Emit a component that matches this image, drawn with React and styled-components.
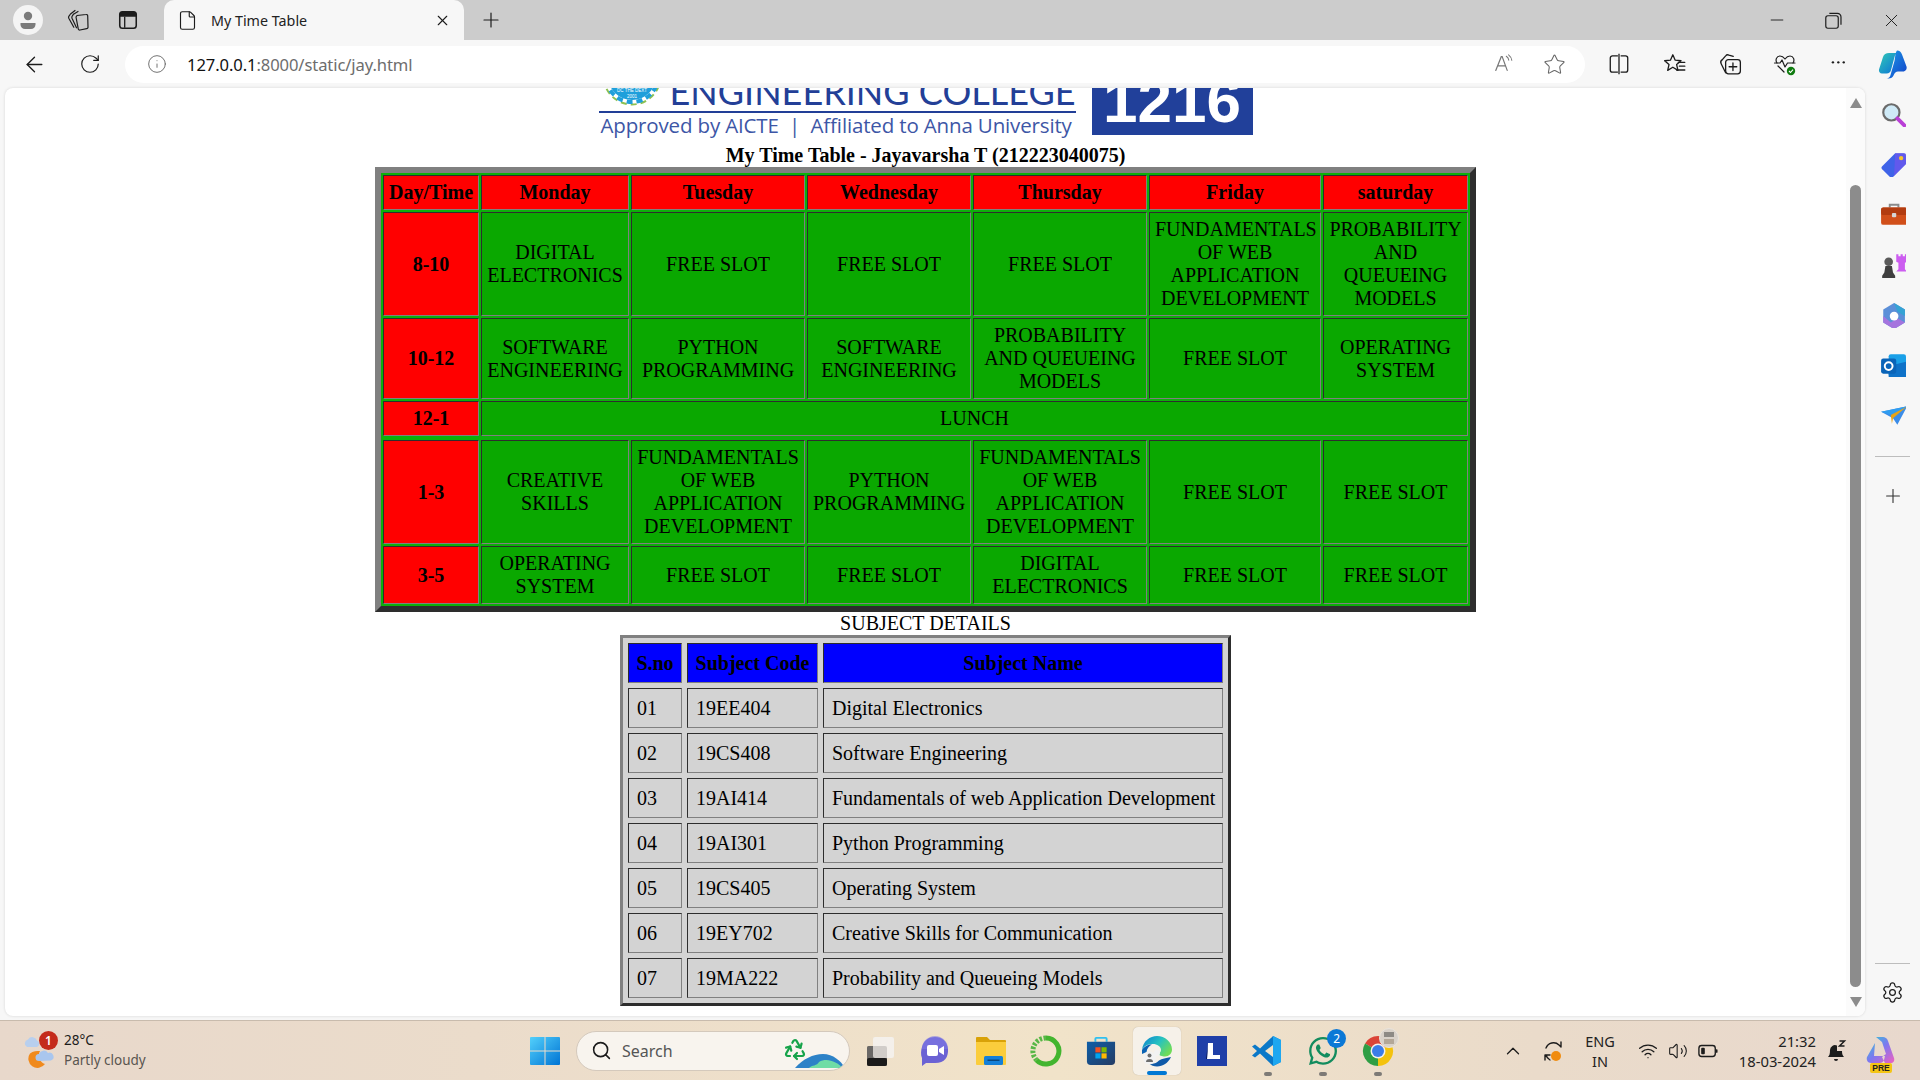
import React from "react";
import styled, { createGlobalStyle } from "styled-components";
import { ArrowLeft, RotateCw, Info, Star, X, Plus, Minus, Settings, Search, ChevronUp, Wifi, Volume2, File, Recycle } from "lucide-react";
import { FaWhatsapp } from "react-icons/fa";

const Global = createGlobalStyle`
  html, body { margin: 0; padding: 0; width: 100%; height: 100%; overflow: hidden; background: #f7f7f7; }
  #root { width: 100%; height: 100%; }
  * { box-sizing: border-box; }
`;

const Shell = styled.div`
  width: 1920px; height: 1080px; display: flex; flex-direction: column; overflow: hidden;
  font-family: "Noto Sans", "Open Sans", sans-serif; color: #1a1a1a;
`;

/* ---------- Title bar ---------- */
const TabBar = styled.div`height: 40px; flex: none; background: #cccccc; display: flex; align-items: stretch; padding-left: 3px;`;
const Slot = styled.div`
  width: ${p => p.$w}px; flex: none; display: flex; align-items: center; justify-content: center;
`;
const Avatar = styled.div`
  width: 30px; height: 30px; border-radius: 50%; background: #f4f4f4; display: flex; align-items: center; justify-content: center;
`;
const Tab = styled.div`
  width: 300px; flex: none; margin-left: 10px; background: #f7f7f7; border-radius: 10px 10px 0 0;
  display: flex; align-items: center; padding: 0 13px 0 13px;
`;
const TabTitle = styled.span`flex: 1; margin-left: 13px; font-size: 14.3px; color: #222;`;
const Grow = styled.div`flex: 1;`;

/* ---------- Toolbar ---------- */
const Toolbar = styled.div`height: 48px; flex: none; background: #f7f7f7; display: flex; align-items: center; padding-left: 6px;`;
const Address = styled.div`
  width: 1460px; height: 37px; flex: none; margin-left: 7px; margin-right: 6.5px; background: #fff; border-radius: 18.5px;
  display: flex; align-items: center; padding-left: 22px;
`;
const Url = styled.span`
  margin-left: 20px; font-size: 16.6px; color: #6d6d6d; flex: 1; letter-spacing: -0.1px;
  b { font-weight: 400; color: #111; }
`;

/* ---------- Body ---------- */
const Body = styled.div`flex: 1; min-height: 0; display: flex; background: #f7f7f7;`;
const Panel = styled.div`
  width: 1860px; flex: none; margin: 0 0 4px 5px; background: #fff; border-radius: 8px; overflow: hidden; display: flex;
  box-shadow: 0 0 3px rgba(0,0,0,.14);
`;
const Viewport = styled.div`flex: 1; min-width: 0; overflow: hidden; font-family: "Liberation Serif", "Times New Roman", serif; font-size: 20px; color: #000; display: flex; flex-direction: column; align-items: center;`;

const LogoClip = styled.div`height: 56px; width: 100%; flex: none; overflow: hidden; display: flex; justify-content: center; align-items: flex-end;`;
const LogoInner = styled.div`width: 654px; flex: none; display: flex; align-items: flex-end; justify-content: space-between; padding-bottom: 7px;`;
const LogoLeft = styled.div`width: 477px; flex: none; display: flex; flex-direction: column;`;
const LogoTop = styled.div`height: 23px; display: flex; align-items: flex-end; justify-content: space-between; padding-left: 3px;`;
const College = styled.span`
  font-family: Lato, sans-serif; font-size: 36px; line-height: 40px; height: 40px; color: #233f97; font-weight: 400; white-space: nowrap; letter-spacing: 0; text-transform: uppercase;
`;
const LogoRule = styled.div`height: 2.5px; background: #223f97;`;
const Tagline = styled.div`
  height: 24px; padding-left: 2px; font-family: "Open Sans", sans-serif; font-size: 20.5px; line-height: 24px; color: #3d56a6; white-space: nowrap; letter-spacing: -0.15px;
`;
const Code = styled.div`
  width: 161px; height: 70px; flex: none; margin-bottom: 2px; background: #21409a; color: #fff; overflow: hidden;
  display: flex; align-items: flex-end; justify-content: center; font-family: "Liberation Sans", sans-serif; font-weight: 700; font-size: 62px; line-height: 62px; padding-bottom: 3px;
`;

const Heading = styled.div`height: 23px; line-height: 23px; flex: none; font-weight: ${p => (p.$bold ? 700 : 400)}; text-align: center;`;

const Timetable = styled.table`
  width: 1101px; flex: none; table-layout: fixed; border-collapse: separate; border-spacing: 2px; background: #0db00a;
  border: 6px solid; border-color: #808080 #2d2d2d #2d2d2d #808080;
`;
const Cell = styled.td`
  padding: 5px; text-align: center; vertical-align: middle; line-height: 23px; color: #000;
  background: ${p => (p.$red ? "#ff0000" : "#0aa800")}; font-weight: ${p => (p.$red ? 700 : 400)};
  border: 1px solid; border-color: #2d2d2d #808080 #808080 #2d2d2d;
`;

const SubjectTable = styled.table`
  width: 611px; flex: none; table-layout: fixed; border-collapse: separate; border-spacing: 5px; background: #d3d3d3;
  border: 3px solid; border-color: #808080 #2d2d2d #2d2d2d #808080;
`;
const SubjectCell = styled.td`
  height: 40px; padding: 0 0 0 8px; line-height: 23px; color: #000; white-space: nowrap;
  border: 1px solid; border-color: #2d2d2d #808080 #808080 #2d2d2d;
`;
const SubjectHead = styled.th`
  height: 40px; padding: 0; text-align: center; line-height: 23px; color: #000; background: #0000ff; font-weight: 700; white-space: nowrap;
  border: 1px solid; border-color: #2d2d2d #808080 #808080 #2d2d2d;
`;

const Scrollbar = styled.div`width: 19px; flex: none; background: #fbfbfb; display: flex; flex-direction: column; align-items: center; padding-top: 10px;`;
const Arrow = styled.div`
  width: 0; height: 0; border-left: 6.5px solid transparent; border-right: 6.5px solid transparent; flex: none;
  ${p => (p.$down ? "border-top: 10px solid #8c8c8c;" : "border-bottom: 10px solid #8c8c8c;")}
`;
const Thumb = styled.div`width: 11px; height: 802px; flex: none; margin: 77px 0 10px; background: #8c8c8c; border-radius: 6px;`;

const SidePane = styled.div`width: 55px; flex: none; display: flex; flex-direction: column; align-items: center; padding-top: 1px;`;
const SideSlot = styled.div`height: 50.2px; width: 100%; flex: none; display: flex; align-items: center; justify-content: center;`;
const SidePlus = styled(SideSlot)`margin-top: 14px;`;
const SideRule = styled.div`width: 35px; height: 1px; flex: none; background: #bdbdbd; margin: ${p => p.$m};`;
const GearSlot = styled.div`width: 100%; height: 44px; flex: none; margin-bottom: 6px; display: flex; align-items: center; justify-content: center;`;

/* ---------- Taskbar ---------- */
const Taskbar = styled.div`
  height: 60px; flex: none; border-top: 1px solid #c8bbad; display: grid; grid-template-columns: 530px 1fr auto; align-items: center;
  background: linear-gradient(90deg, #e8d8cb 0%, #ebdccb 25%, #f1e3c9 55%, #eadbca 80%, #e8d8cd 100%);
`;
const Weather = styled.div`display: flex; align-items: center; padding-left: 24px; position: relative;`;
const WeatherBadge = styled.span`
  position: absolute; left: 39px; top: -2px; width: 19px; height: 19px; border-radius: 50%; background: #c42b1c; color: #fff;
  font-size: 12px; font-weight: 600; display: flex; align-items: center; justify-content: center; font-family: "Noto Sans", sans-serif;
`;
const WeatherText = styled.div`margin-left: 6px; margin-top: -2px; display: flex; flex-direction: column; gap: 2px; font-size: 13.5px; line-height: 18px; color: #1c1c1c; span + span { color: #595550; }`;
const Center = styled.div`display: flex; align-items: center;`;
const SearchBox = styled.div`
  width: 274px; height: 40px; margin: 0 2.5px 0 16px; border-radius: 20px; background: #f8f4ee; border: 1px solid #d4c9bc; flex: none;
  display: flex; align-items: center; padding-left: 14px; position: relative; overflow: hidden; font-size: 16px; color: #555;
`;
const SearchText = styled.span`margin-left: 10px;`;
const SearchArt = styled.div`position: absolute; right: 4px; bottom: 2px; line-height: 0;`;
const RecycleMark = styled.div`position: absolute; right: 42px; top: 5px; line-height: 0;`;
const TaskBtn = styled.div`
  width: 55.3px; height: 48px; flex: none; display: flex; align-items: center; justify-content: center; position: relative;
  &::before {
    content: ""; position: absolute; left: 3.6px; top: 0; width: 48px; height: 48px; border-radius: 5px;
    background: ${p => (p.$active ? "#f6f1e9" : "transparent")}; box-shadow: ${p => (p.$active ? "0 0 1px rgba(0,0,0,.25)" : "none")};
  }
  svg { position: relative; }
`;
const Underline = styled.span`position: absolute; bottom: 0; left: 17.6px; width: 20px; height: 4px; border-radius: 2px; background: #0078d4;`;
const RunDot = styled.span`position: absolute; bottom: -1px; left: 24px; width: 8px; height: 4px; border-radius: 2px; background: #7d7a76;`;
const CountBadge = styled.span`
  position: absolute; top: 2px; right: 4px; width: 19px; height: 19px; border-radius: 50%; background: #0b78d6; color: #fff;
  font-size: 12px; display: flex; align-items: center; justify-content: center;
`;
const ThumbBadge = styled.span`
  position: absolute; top: 1px; right: 6px; width: 20px; height: 20px; border-radius: 50%; background: #d9d2ca; border: 1px solid #e9e4dc;
  display: flex; flex-direction: column; align-items: center; justify-content: center; gap: 2px;
  i { display: block; width: 10px; height: 5px; background: #8d8a85; }
  i + i { background: #b3a798; }
`;
const Tray = styled.div`display: flex; align-items: center; height: 100%; padding-right: 16px;`;
const TraySlot = styled.div`width: ${p => p.$w}px; flex: none; display: flex; align-items: center; justify-content: center; position: relative;`;
const Lang = styled.div`width: 50px; flex: none; text-align: center; font-size: 14.5px; line-height: 20px; color: #222;`;
const Clock = styled.div`width: 92px; flex: none; text-align: right; font-size: 14.8px; line-height: 20px; color: #222; white-space: nowrap;`;
const PreTag = styled.span`
  position: absolute; left: 14px; bottom: -6px; width: 22px; text-align: center; background: #f4c514; color: #222; font-size: 8.5px; font-weight: 800; border-radius: 2px; line-height: 10px; font-family: "Liberation Sans", sans-serif;
`;

/* ---------- Drawn icons ---------- */
const I = ({ size = 24, vb = "0 0 24 24", children, ...r }) => (
  <svg width={size} height={size} viewBox={vb} fill="none" {...r}>{children}</svg>
);
const line = { stroke: "#1c1c1c", strokeWidth: 1.4, strokeLinecap: "round", strokeLinejoin: "round" };

const Person = () => <I size={24}><circle cx="12" cy="8" r="4.2" fill="#7b7b7b" /><path d="M4.5 15h15v1.5a4.5 4.5 0 0 1-4.5 4.5H9a4.5 4.5 0 0 1-4.5-4.5z" fill="#7b7b7b" /></I>;
const Workspaces = () => <I size={24}><g {...line} strokeWidth="1.2"><path d="M11 7.500l9-1a1.500 1.500 0 0 1 1.700 1.300L22 19a1.500 1.500 0 0 1-1.300 1.700L14 22a1.500 1.500 0 0 1-1.800-1.300L10 9z" /><path d="M7.500 6.200 12 3.500M7.500 6.200 6 8.500c-.3.700-.2 1.200 0 1.800l4.500 9.500" /><path d="M4.500 6 9 2.500M4.500 6 2.800 8.300c-.4.700-.3 1.300 0 1.900l5 9" /></g></I>;
const VTabs = () => <I size={22} vb="0 0 20 20"><rect x="2.5" y="2.5" width="15" height="15" rx="2.5" stroke="#1c1c1c" strokeWidth="1.4" /><path d="M2.5 5a2.5 2.5 0 0 1 2.5-2.5h10A2.5 2.5 0 0 1 17.5 5v2h-15z" fill="#1c1c1c" /><path d="M7 7v10" stroke="#1c1c1c" strokeWidth="1.2" /></I>;
const Restore = () => <I size={19} vb="0 0 16 16"><rect x="1.5" y="4" width="10.5" height="10.5" rx="1.8" stroke="#1c1c1c" strokeWidth="1" /><path d="M4.500 2h6.800A3 3 0 0 1 14.300 5v6.600" stroke="#1c1c1c" strokeWidth="1" /></I>;
const ReadAloud = () => <I size={22}><path d="M3 19 9 4h1l5.5 15M5.200 14h8" stroke="#777" strokeWidth="1.3" strokeLinecap="round" /><path d="M14.500 3.500a6 6 0 0 1 2.700 4.300M17 2a9 9 0 0 1 3.500 6" stroke="#777" strokeWidth="1.1" strokeLinecap="round" /></I>;
const SplitScreen = () => <I size={24} vb="0 0 22 22"><path d="M10 3.500H5a2 2 0 0 0-2 2v11a2 2 0 0 0 2 2h5M12.500 3.500H17a2 2 0 0 1 2 2v11a2 2 0 0 1-2 2h-4.500M11 1.500v19" stroke="#1c1c1c" strokeWidth="1.200" /></I>;
const Favs = () => <I size={24} vb="0 0 22 22"><path d="M9 2.500l2.200 5 5.300.5-4 3.500 1.200 5.300L9 14l-4.700 2.800 1.200-5.300-4-3.500 5.300-.5z" {...line} strokeWidth="1.200" /><path d="M14 9.500h6M15 13h5M12.500 16.500H20" {...line} strokeWidth="1.200" /></I>;
const Collections = () => <I size={24} vb="0 0 22 22"><rect x="7" y="7" width="13.500" height="13" rx="2.500" {...line} strokeWidth="1.200" /><path d="M13.700 10v7M10.200 13.500h7" {...line} strokeWidth="1.200" /><path d="M7 19 3 11a3 3 0 0 1 1-4l3-3.500a2.500 2.500 0 0 1 3-.7L14 4" {...line} strokeWidth="1.200" /></I>;
const Health = () => <I size={24}><path d="M20 11c2-3 .5-7-3-7-2 0-3.500 1-5 3-1.500-2-3-3-5-3-3.500 0-5 4-3 7" {...line} strokeWidth="1.200" /><path d="M1.500 11H7l2-3 3 7 2.500-4H22M5 14l6 6" {...line} strokeWidth="1.200" /><circle cx="18" cy="19" r="4.200" fill="#107c10" /><path d="M16 19l1.500 1.500 2.500-2.800" stroke="#fff" strokeWidth="1.100" /></I>;
const Dots = () => <I size={20}><circle cx="3.500" cy="10" r="1.400" fill="#1c1c1c" /><circle cx="10" cy="10" r="1.400" fill="#1c1c1c" /><circle cx="16.500" cy="10" r="1.400" fill="#1c1c1c" /></I>;

const Copilot = ({ size = 30 }) => (
  <I size={size} vb="0 0 30 30">
    <defs>
      <linearGradient id="cpA" x1="0" y1="0" x2="1" y2="1"><stop offset="0" stopColor="#31c9b6" /><stop offset="1" stopColor="#0a6fd8" /></linearGradient>
      <linearGradient id="cpB" x1="0" y1="0" x2="1" y2="1"><stop offset="0" stopColor="#1e9ee8" /><stop offset="1" stopColor="#1140c8" /></linearGradient>
    </defs>
    <path d="M11 4h9c-2 .5-3 2-3.500 4L13 21c-.5 2-2 3.500-4.500 3.500H4c-2 0-3.500-2-3-4L5 8c.8-2.500 3-4 6-4z" fill="url(#cpA)" />
    <path d="M19 1.500c2.500 0 4 1.500 5 4l4.500 12c.8 2.500-1 5-3.500 5h-5c-2 0-3.500 1.500-4.500 4-.8 2-2.500 3-5 3h-2c2 0 3.500-1.500 4-3.500l4-14c.8-3 .5-8 2.500-10.500z" fill="url(#cpB)" />
  </I>
);

const SearchColor = () => <I size={26}><circle cx="10.500" cy="10.500" r="7.500" fill="#cfeaf7" stroke="#6b6b6b" strokeWidth="2" /><path d="M16 16l6.500 6.500" stroke="#b93fd6" strokeWidth="3.500" strokeLinecap="round" /></I>;
const TagIcon = () => <I size={26}><path d="M14 2h8a2 2 0 0 1 2 2v8L12 24a2 2 0 0 1-2.800 0L2 16.800A2 2 0 0 1 2 14z" fill="#3f63e8" /><path d="M14 2h8a2 2 0 0 1 2 2v8L13 23z" fill="#7d52ee" opacity=".55" /><circle cx="19.500" cy="6.500" r="2" fill="#f5c52d" /></I>;
const Toolbox = () => <I size={26}><path d="M9 6V3.500h8V6" stroke="#8a8a8a" strokeWidth="1.800" /><rect x="1" y="6" width="24" height="16" rx="2" fill="#d14f1a" /><rect x="1" y="6" width="24" height="7" rx="2" fill="#b23c10" /><rect x="11" y="11" width="4" height="4" rx="1" fill="#d6d6d6" /></I>;
const Chess = () => <I size={26}><path d="M15 2h2v2h2V2h2v2h2V2h2v7l-2 1v6l2 2H15l2-2v-6l-2-1z" fill="#cc5df0" /><circle cx="8" cy="9" r="4" fill="#5a5a5a" /><path d="M5 13h6l1 6 2 3v3H2v-3l2-3z" fill="#3f3f3f" /></I>;
const M365 = () => <I size={26}><path d="M13 1l10 6v12l-10 6-10-6V7z" fill="#5b8fd8" /><path d="M13 1l10 6v6l-7-4z" fill="#35a3d4" /><path d="M3 13v6l10 6 10-6-7-4-6 4z" fill="#a574de" /><circle cx="13" cy="13" r="4" fill="#fff" /></I>;
const Outlook = () => <I size={26}><rect x="8" y="2" width="16" height="21" rx="2" fill="#1aa0e8" /><path d="M8 13l16-4v14H8z" fill="#0f72c8" /><rect x="1" y="6" width="14" height="14" rx="2" fill="#0a64b8" /><circle cx="8" cy="13" r="3.600" stroke="#fff" strokeWidth="1.800" /></I>;
const Plane = () => <I size={26}><path d="M1 9l24-5-9 17-4-6z" fill="#3b8ce8" /><path d="M1 9l24-5-15 8z" fill="#2f9df0" /><path d="M10 12l15-8-13 11-1 5z" fill="#e7a416" /></I>;

const WeatherIcon = () => <I size={34} vb="0 0 34 34"><path d="M6 19.500a9 9 0 0 0 15 10.500 9 9 0 0 1-5-13c-3 0-7 0-10 2.500z" fill="#f08a1d" /><path d="M3 13a4 4 0 0 1 1-7.500 5 5 0 0 1 9 1 3.500 3.500 0 0 1 0 6.500z" fill="#b8cfee" /><path d="M15 27a3.500 3.500 0 0 1 0-7 5 5 0 0 1 9-1 4 4 0 0 1 3 7.500z" fill="#a9c6ee" /></I>;
const WinLogo = () => (
  <I size={30} vb="0 0 30 30">
    <defs><linearGradient id="win" x1="0" y1="0" x2="1" y2="1"><stop offset="0" stopColor="#53d0fb" /><stop offset="1" stopColor="#0074d4" /></linearGradient></defs>
    <path d="M1 1h13.500v13.500H0V2a1 1 0 0 1 1-1zM15.500 1H29a1 1 0 0 1 1 1v12.500H15.500zM0 15.500h14.500V29H1a1 1 0 0 1-1-1zM15.500 15.500H30V28a1 1 0 0 1-1 1H15.500z" fill="url(#win)" />
  </I>
);
const GlobeArt = () => (
  <svg width="50" height="15" viewBox="0 0 50 15" fill="none">
    <path d="M0 15C8 6 18 1 28 1s18 7 22 14z" fill="#2d82c7" />
    <path d="M14 15c3-3 8-2 10-6 8-5 18 0 24 6z" fill="#6fdca5" />
  </svg>
);
const StackSq = () => <I size={32} vb="0 0 32 32"><rect x="3" y="11" width="20" height="20" rx="2" fill="#1b1b1b" /><rect x="9" y="2" width="21" height="21" rx="2" fill="#f3f0ec" opacity=".95" /><rect x="3" y="11" width="20" height="20" rx="2" fill="#b9b6b2" opacity=".5" /><rect x="3" y="23" width="20" height="8" rx="2" fill="#1b1b1b" /></I>;
const Meet = () => <I size={32} vb="0 0 32 32"><path d="M16 2c7 0 12 4 13 12 .5 8-3 14-13 14h-9L3 31v-8C1.500 20 2 15 3 12 5 5 10 2 16 2z" fill="#6b62d4" /><path d="M3 14a13 13 0 0 1 26 0H3z" fill="#7e79e4" opacity=".6" /><rect x="8" y="10" width="11" height="11" rx="2" fill="#fff" /><path d="M20 14l5-3v9l-5-3z" fill="#fff" /></I>;
const Folder = () => <I size={32} vb="0 0 32 32"><path d="M1 3a1 1 0 0 1 1-1h10l3 3h15a1 1 0 0 1 1 1v4H1z" fill="#d9a208" /><path d="M1 7h30v22a1 1 0 0 1-1 1H2a1 1 0 0 1-1-1z" fill="#fbcd3c" /><rect x="9" y="21" width="19" height="9" rx="1.500" fill="#1580d8" /><rect x="12.500" y="24.500" width="12" height="1.500" fill="#08477f" /></I>;
const Ring = () => <I size={32} vb="0 0 32 32"><path d="M16 3a13 13 0 1 1-9.500 22" stroke="#43b52f" strokeWidth="5" /><path d="M16 3A13 13 0 0 0 6.500 25" stroke="#58b746" strokeWidth="5" strokeDasharray="2.500 1.500" /></I>;
const Store = () => (
  <I size={30} vb="0 0 32 32">
    <defs><linearGradient id="st" x1="0" y1="0" x2="1" y2="1"><stop offset="0" stopColor="#0d5ea8" /><stop offset="1" stopColor="#263c63" /></linearGradient></defs>
    <path d="M10 6V3a1 1 0 0 1 1-1h10a1 1 0 0 1 1 1v3" stroke="#2fc0f0" strokeWidth="2" />
    <path d="M1 6h30v21a4 4 0 0 1-4 4H5a4 4 0 0 1-4-4z" fill="url(#st)" />
    <rect x="10" y="12" width="5.500" height="5.500" fill="#f25022" /><rect x="16.500" y="12" width="5.500" height="5.500" fill="#7fba00" />
    <rect x="10" y="18.500" width="5.500" height="5.500" fill="#00a4ef" /><rect x="16.500" y="18.500" width="5.500" height="5.500" fill="#ffb900" />
  </I>
);
const Edge = () => (
  <I size={32} vb="0 0 32 32">
    <defs>
      <linearGradient id="edA" x1="0" y1="0" x2="1" y2=".6"><stop offset="0" stopColor="#0c7fd0" /><stop offset=".55" stopColor="#27c2c0" /><stop offset="1" stopColor="#6fdc58" /></linearGradient>
    </defs>
    <path d="M1 15C2 6 9 1 16 1c8 0 15 6 15 13.500 0 4-3 7-7 7-3 0-6-1-6-2.500 0-1 2-1.500 2-4 0-3.500-4-6-8-6-5 0-9 2-11 6z" fill="url(#edA)" />
    <path d="M1 15c2-3.500 6-5.500 10-5.500-3 1.500-5 4-5.500 7.500L1 19z" fill="#0b63b4" />
    <path d="M30 22c-3 6-8 9.500-14 9.500-3 0-6-1-8-3 5 .5 7 0 10-3 3-2 7-2.500 12-3.500z" fill="#0f5aa8" />
    <circle cx="8.500" cy="23" r="6.500" fill="#f2f2f2" /><circle cx="8.500" cy="20.500" r="2" fill="#6d6d6d" /><path d="M5 27a3.500 3 0 0 1 7 0z" fill="#6d6d6d" />
    <circle cx="16" cy="18" r="3" fill="#f2f2f2" />
  </I>
);
const LLogo = () => <I size={30} vb="0 0 30 30"><rect width="30" height="30" fill="#1f3fa8" /><path d="M11 7h5v12h7v4H10z" fill="#fff" /><path d="M11 7l-2 16h1z" fill="#0b1a55" /></I>;
const VSCode = () => <I size={32} vb="0 0 32 32"><path d="M22 1l8 4v22l-8 4-13-12.500-5 4-3-2 5-4.500-5-4.500 3-2 5 4z" fill="#0a78c8" /><path d="M22 1l8 4v22l-8 4z" fill="#1ea7f0" /><path d="M22 10l-8 6 8 6z" fill="#f1e3c9" /></I>;
const Chrome = () => (
  <I size={32} vb="0 0 32 32">
    <path d="M16 16 L3 8.500A15 15 0 0 1 29 8.500z" fill="#db4437" />
    <path d="M16 16 L3 8.500A15 15 0 0 0 16 31z" fill="#2f9e44" />
    <path d="M16 16 L29 8.500A15 15 0 0 1 16 31z" fill="#f4c20d" />
    <circle cx="16" cy="16" r="7.500" fill="#f4f0ea" /><circle cx="16" cy="16" r="6" fill="#3b7ce8" />
  </I>
);
const Sync = () => <I size={24}><path d="M5 9a8 8 0 0 1 13-3l2 2V3" {...line} /><path d="M5 16a8 8 0 0 0 4 5M4 21v-5h5" {...line} /><circle cx="15" cy="17" r="5" fill="#f08c10" /></I>;
const Battery = () => <I size={20} vb="0 0 22 20"><rect x="1" y="4" width="18" height="12" rx="3" stroke="#1c1c1c" strokeWidth="1.500" /><rect x="3.500" y="6.500" width="4" height="7" rx="1" fill="#1c1c1c" /><rect x="19.500" y="8" width="2" height="4" rx="1" fill="#1c1c1c" /></I>;
const Bell = () => <I size={24}><path d="M5 18c1.500-1.500 2-3 2-7a5 5 0 0 1 7-4.500V12h5c0 3 .5 4.500 2 6z" fill="#1c1c1c" transform="translate(-1 0)" /><path d="M10 20h4a2 2 0 0 1-4 0z" fill="#1c1c1c" /><path d="M15.500 2h5l-5 5h5" stroke="#1c1c1c" strokeWidth="1.500" /></I>;
const CopilotPre = () => (
  <I size={32} vb="0 0 32 32">
    <defs><linearGradient id="cpP" x1="0" y1="0" x2="1" y2="1"><stop offset="0" stopColor="#2bd0d0" /><stop offset=".5" stopColor="#7d78f0" /><stop offset="1" stopColor="#f060c0" /></linearGradient></defs>
    <path d="M12 2h7c2 0 4 1 5 4l6 17c1 3-1 5-3 5h-6l-3-6 4-3-4-12zM11 8l-8 14c-1 3 1 6 4 6h9c2 0 3-1 4-3l1-4H10z" fill="url(#cpP)" />
  </I>
);

const Emblem = () => (
  <svg width="60" height="60" viewBox="0 0 60 60" style={{ flex: "none", marginBottom: 5 }}>
    <circle cx="30" cy="30" r="28.500" fill="none" stroke="#8cc152" strokeWidth="2" strokeDasharray="6 4" />
    <circle cx="30" cy="30" r="26" fill="none" stroke="#1f9fdb" strokeWidth="4" strokeDasharray="6 4" />
    <circle cx="30" cy="30" r="24" fill="#1f9fdb" />
    <text x="30" y="46" textAnchor="middle" fontSize="4.500" fill="#fff" fontFamily="Liberation Sans, sans-serif">DC THE DEXT</text>
    <text x="30" y="52" textAnchor="middle" fontSize="4.500" fill="#fff" fontFamily="Liberation Sans, sans-serif">2001</text>
  </svg>
);

const days = ["Day/Time", "Monday", "Tuesday", "Wednesday", "Thursday", "Friday", "saturday"];
const colW = [96, 148, 174, 164, 174, 172, 145];
const F = "FREE SLOT";
const FW = "FUNDAMENTALS OF WEB APPLICATION DEVELOPMENT";
const PQ = "PROBABILITY AND QUEUEING MODELS";
const rows = [
  { t: "8-10", h: 104, c: ["DIGITAL ELECTRONICS", F, F, F, FW, PQ] },
  { t: "10-12", h: 81, c: ["SOFTWARE ENGINEERING", "PYTHON PROGRAMMING", "SOFTWARE ENGINEERING", PQ, F, "OPERATING SYSTEM"] },
  { t: "12-1", h: 35, lunch: true },
  { t: "1-3", h: 104, c: ["CREATIVE SKILLS", FW, "PYTHON PROGRAMMING", FW, F, F] },
  { t: "3-5", h: 58, c: ["OPERATING SYSTEM", F, F, "DIGITAL ELECTRONICS", F, F] },
];
const subjects = [
  ["01", "19EE404", "Digital Electronics"],
  ["02", "19CS408", "Software Engineering"],
  ["03", "19AI414", "Fundamentals of web Application Development"],
  ["04", "19AI301", "Python Programming"],
  ["05", "19CS405", "Operating System"],
  ["06", "19EY702", "Creative Skills for Communication"],
  ["07", "19MA222", "Probability and Queueing Models"],
];

export default function App() {
  return (
    <Shell>
      <Global />
      <TabBar>
        <Slot $w={50}><Avatar><Person /></Avatar></Slot>
        <Slot $w={49}><Workspaces /></Slot>
        <Slot $w={52}><VTabs /></Slot>
        <Tab>
          <File size={21} strokeWidth={1.3} color="#1c1c1c" />
          <TabTitle>My Time Table</TabTitle>
          <X size={17} strokeWidth={1.6} color="#1c1c1c" />
        </Tab>
        <Slot $w={54}><Plus size={24} strokeWidth={1.2} color="#1c1c1c" /></Slot>
        <Grow />
        <Slot $w={57}><Minus size={20} strokeWidth={1.1} color="#1c1c1c" /></Slot>
        <Slot $w={57}><Restore /></Slot>
        <Slot $w={58}><X size={21} strokeWidth={1.1} color="#1c1c1c" /></Slot>
      </TabBar>
      <Toolbar>
        <Slot $w={56}><ArrowLeft size={25} strokeWidth={1.3} color="#1c1c1c" /></Slot>
        <Slot $w={56}><RotateCw size={22} strokeWidth={1.3} color="#1c1c1c" /></Slot>
        <Address>
          <Info size={20} strokeWidth={1.1} color="#666" />
          <Url><b>127.0.0.1</b>:8000/static/jay.html</Url>
          <Slot $w={50}><ReadAloud /></Slot>
          <Slot $w={50}><Star size={23} strokeWidth={1.1} color="#666" /></Slot>
          <Slot $w={6} />
        </Address>
        <Slot $w={55.5}><SplitScreen /></Slot>
        <Slot $w={55.5}><Favs /></Slot>
        <Slot $w={55}><Collections /></Slot>
        <Slot $w={55}><Health /></Slot>
        <Slot $w={55}><Dots /></Slot>
        <Slot $w={51}><Copilot /></Slot>
      </Toolbar>
      <Body>
        <Panel>
          <Viewport>
            <LogoClip>
              <LogoInner>
                <LogoLeft>
                  <LogoTop><Emblem /><College>Engineering College</College></LogoTop>
                  <LogoRule />
                  <Tagline>Approved by AICTE&nbsp; |&nbsp; Affiliated to Anna University</Tagline>
                </LogoLeft>
                <Code>1216</Code>
              </LogoInner>
            </LogoClip>
            <Heading $bold>My Time Table - Jayavarsha T (212223040075)</Heading>
            <Timetable>
              <colgroup>{colW.map((w, i) => <col key={i} width={w} />)}</colgroup>
              <tbody>
                <tr style={{ height: 35 }}>{days.map(d => <Cell as="th" key={d} $red>{d}</Cell>)}</tr>
                {rows.map(r => (
                  <React.Fragment key={r.t}>
                    <tr style={{ height: r.h }}>
                      <Cell as="th" $red>{r.t}</Cell>
                      {r.lunch ? <Cell colSpan={6}>LUNCH</Cell> : r.c.map((c, i) => <Cell key={i}>{c}</Cell>)}
                    </tr>
                    {r.lunch && <tr />}
                  </React.Fragment>
                ))}
              </tbody>
            </Timetable>
            <Heading>SUBJECT DETAILS</Heading>
            <SubjectTable>
              <colgroup><col width="54" /><col width="131" /><col width="400" /></colgroup>
              <tbody>
                <tr>
                  <SubjectHead>S.no</SubjectHead><SubjectHead>Subject Code</SubjectHead><SubjectHead>Subject Name</SubjectHead>
                </tr>
                {subjects.map(s => (
                  <tr key={s[0]}>{s.map((v, i) => <SubjectCell key={i}>{v}</SubjectCell>)}</tr>
                ))}
              </tbody>
            </SubjectTable>
          </Viewport>
          <Scrollbar>
            <Arrow />
            <Thumb />
            <Arrow $down />
          </Scrollbar>
        </Panel>
        <SidePane>
          <SideSlot><SearchColor /></SideSlot>
          <SideSlot><TagIcon /></SideSlot>
          <SideSlot><Toolbox /></SideSlot>
          <SideSlot><Chess /></SideSlot>
          <SideSlot><M365 /></SideSlot>
          <SideSlot><Outlook /></SideSlot>
          <SideSlot><Plane /></SideSlot>
          <SideRule $m="16px 0 0" />
          <SidePlus><Plus size={22} strokeWidth={1.2} color="#333" /></SidePlus>
          <SideRule $m="auto 0 6px" />
          <GearSlot><Settings size={23} strokeWidth={1.3} color="#1c1c1c" /></GearSlot>
        </SidePane>
      </Body>
      <Taskbar>
        <Weather>
          <WeatherIcon />
          <WeatherBadge>1</WeatherBadge>
          <WeatherText><span>28°C</span><span>Partly cloudy</span></WeatherText>
        </Weather>
        <Center>
          <WinLogo />
          <SearchBox>
            <Search size={21} strokeWidth={1.8} color="#1c1c1c" />
            <SearchText>Search</SearchText>
            <SearchArt><GlobeArt /></SearchArt>
            <RecycleMark><Recycle size={24} strokeWidth={2.2} color="#16a34a" /></RecycleMark>
          </SearchBox>
          <TaskBtn><StackSq /></TaskBtn>
          <TaskBtn><Meet /></TaskBtn>
          <TaskBtn><Folder /></TaskBtn>
          <TaskBtn><Ring /></TaskBtn>
          <TaskBtn><Store /></TaskBtn>
          <TaskBtn $active><Edge /><Underline /></TaskBtn>
          <TaskBtn><LLogo /></TaskBtn>
          <TaskBtn><VSCode /><RunDot /></TaskBtn>
          <TaskBtn><FaWhatsapp size={32} color="#128c5e" /><CountBadge>2</CountBadge><RunDot /></TaskBtn>
          <TaskBtn><Chrome /><ThumbBadge><i /><i /></ThumbBadge><RunDot /></TaskBtn>
        </Center>
        <Tray>
          <TraySlot $w={36}><ChevronUp size={22} strokeWidth={1.4} color="#1c1c1c" /></TraySlot>
          <TraySlot $w={44}><Sync /></TraySlot>
          <Lang>ENG<br />IN</Lang>
          <TraySlot $w={8} />
          <TraySlot $w={30}><Wifi size={20} strokeWidth={1.6} color="#1c1c1c" /></TraySlot>
          <TraySlot $w={29}><Volume2 size={20} strokeWidth={1.3} color="#1c1c1c" /></TraySlot>
          <TraySlot $w={32}><Battery /></TraySlot>
          <Clock>21:32<br />18-03-2024</Clock>
          <TraySlot $w={40}><Bell /></TraySlot>
          <TraySlot $w={48}><CopilotPre /><PreTag>PRE</PreTag></TraySlot>
        </Tray>
      </Taskbar>
    </Shell>
  );
}
